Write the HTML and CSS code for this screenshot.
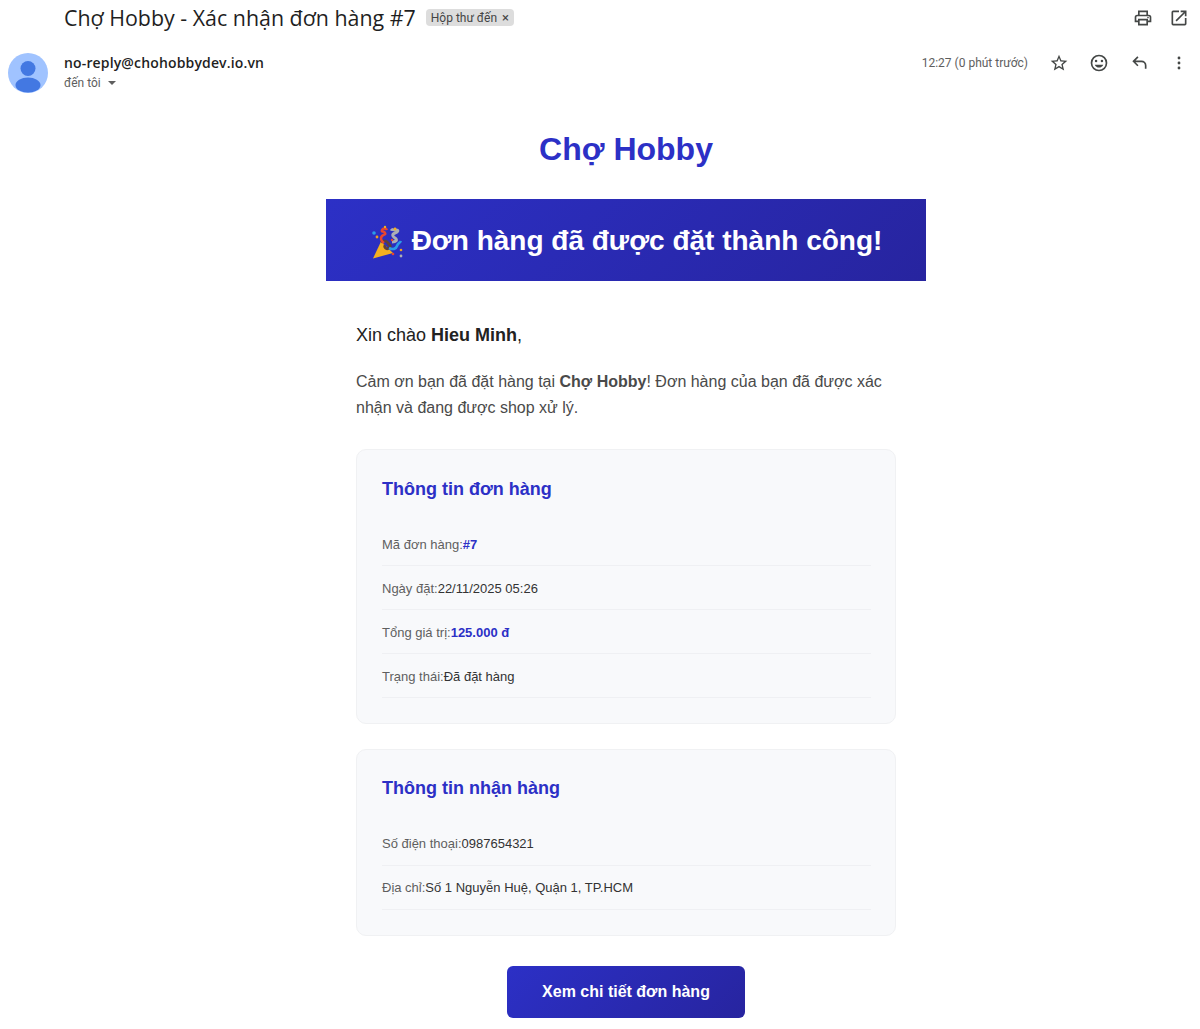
FILE: index.html
```html
<!DOCTYPE html>
<html lang="vi">
<head>
<meta charset="utf-8">
<title>Chợ Hobby - Xác nhận đơn hàng #7</title>
<link rel="stylesheet" href="styles.css">
</head>
<body>
<header class="subject-bar">
  <h1 class="subject">Chợ Hobby - Xác nhận đơn hàng #7</h1>
  <span class="label">Hộp thư đến <span class="label-x">×</span></span>
  <div class="subject-actions">
    <svg class="icon" viewBox="0 0 24 24"><path d="M19 8h-1V3H6v5H5a3 3 0 0 0-3 3v6h4v4h12v-4h4v-6a3 3 0 0 0-3-3zM8 5h8v3H8V5zm8 14H8v-4h8v4zm4-4h-2v-2H6v2H4v-4a1 1 0 0 1 1-1h14a1 1 0 0 1 1 1v4z"/><circle cx="18" cy="11.5" r="1"/></svg>
    <svg class="icon" viewBox="0 0 24 24"><path d="M19 19H5V5h7V3H5a2 2 0 0 0-2 2v14a2 2 0 0 0 2 2h14a2 2 0 0 0 2-2v-7h-2v7zM14 3v2h3.6l-9.8 9.8 1.4 1.4L19 6.4V10h2V3h-7z"/></svg>
  </div>
</header>
<section class="sender-row">
  <svg class="avatar" viewBox="0 0 40 40"><circle cx="20" cy="20" r="20" fill="#a0c3ff"/><circle cx="20" cy="15.5" r="7.5" fill="#4378e2"/><ellipse cx="20" cy="32" rx="12.5" ry="7.5" fill="#4378e2"/></svg>
  <div class="sender-text">
    <div class="sender-mail">no-reply@chohobbydev.io.vn</div>
    <div class="sender-to">đến tôi <span class="caret"></span></div>
  </div>
  <div class="sender-actions">
    <span class="time">12:27 (0 phút trước)</span>
    <svg class="icon" viewBox="0 0 24 24"><path d="M22 9.24l-7.19-.62L12 2 9.19 8.63 2 9.24l5.46 4.73L5.82 21 12 17.27 18.18 21l-1.63-7.03L22 9.24zM12 15.4l-3.76 2.27 1-4.28-3.32-2.88 4.38-.38L12 6.1l1.71 4.04 4.38.38-3.32 2.88 1 4.28L12 15.4z"/></svg>
    <svg class="icon" viewBox="0 0 24 24"><path d="M12 2a10 10 0 1 0 0 20 10 10 0 0 0 0-20zm0 18a8 8 0 1 1 0-16 8 8 0 0 1 0 16z"/><circle cx="15.5" cy="9.5" r="1.5"/><circle cx="8.5" cy="9.5" r="1.5"/><path d="M12 17.5c2.3 0 4.3-1.5 5.1-3.5H6.9c.8 2 2.8 3.5 5.1 3.5z"/></svg>
    <svg class="icon" viewBox="0 0 24 24"><path d="M21 19h-2v-4a4 4 0 0 0-4-4H7.8l3.6 3.6L10 16l-6-6 6-6 1.4 1.4L7.8 9H15a6 6 0 0 1 6 6v4z"/></svg>
    <svg class="icon" viewBox="0 0 24 24"><circle cx="12" cy="6" r="1.7"/><circle cx="12" cy="12" r="1.7"/><circle cx="12" cy="18" r="1.7"/></svg>
  </div>
</section>
<main class="mail">
  <div class="brand">Chợ Hobby</div>
  <div class="banner">
    <svg class="party" viewBox="0 0 36 36">
      <path d="M3 35.500L11 18.500l12 11.500z" fill="#f4b01f"/>
      <path d="M11 19c3-2 6-1 7 1s4 3 1 5-5-1-4-3" fill="none" stroke="#5f4038" stroke-width="2.8"/>
      <path d="M14 20c-3-2-4-5-2-7s4-1 3-3-4-1-3-3 4-2 5 0" fill="none" stroke="#e8452f" stroke-width="2.6"/>
      <path d="M22 19c4 0 6-2 3-4s-3-4 0-5 4-3 1-3-4 0-5-1" fill="none" stroke="#adaeb5" stroke-width="3"/>
      <path d="M19 25c4 2 7 1 8-2s3-3 4-5" fill="none" stroke="#2c9be8" stroke-width="2.6"/>
      <circle cx="4" cy="10" r="1.8" fill="#2c9be8"/><circle cx="7" cy="14" r="1.4" fill="#f0a020"/>
      <circle cx="15" cy="4" r="1.2" fill="#f4b01f"/><circle cx="25" cy="6" r="1.4" fill="#f4b01f"/>
      <circle cx="31" cy="33" r="1.4" fill="#adaeb5"/><circle cx="23" cy="31" r="1.3" fill="#e8452f"/>
      <circle cx="31" cy="27" r="1.3" fill="#f0a020"/><circle cx="22" cy="17" r="1.2" fill="#e8452f"/>
    </svg>
    <h2 class="banner-title">Đơn hàng đã được đặt thành công!</h2>
  </div>
  <div class="content">
    <p class="greeting">Xin chào <strong>Hieu Minh</strong>,</p>
    <p class="intro">Cảm ơn bạn đã đặt hàng tại <strong>Chợ Hobby</strong>! Đơn hàng của bạn đã được xác nhận và đang được shop xử lý.</p>
    <section class="card">
      <h3 class="card-title">Thông tin đơn hàng</h3>
      <div class="row"><span class="key">Mã đơn hàng:</span><strong class="accent">#7</strong></div>
      <div class="row"><span class="key">Ngày đặt:</span><span>22/11/2025 05:26</span></div>
      <div class="row"><span class="key">Tổng giá trị:</span><strong class="accent">125.000 đ</strong></div>
      <div class="row"><span class="key">Trạng thái:</span><span>Đã đặt hàng</span></div>
    </section>
    <section class="card card-shipping">
      <h3 class="card-title">Thông tin nhận hàng</h3>
      <div class="row"><span class="key">Số điện thoại:</span><span>0987654321</span></div>
      <div class="row"><span class="key">Địa chỉ:</span><span>Số 1 Nguyễn Huệ, Quận 1, TP.HCM</span></div>
    </section>
    <div class="cta-wrap"><a class="cta" href="#">Xem chi tiết đơn hàng</a></div>
  </div>
</main>
</body>
</html>
```
FILE: styles.css
```css
* { box-sizing: border-box; }
html, body { margin: 0; padding: 0; }
body {
  background: #fff;
  color: #222;
  font-family: "Liberation Sans", Arial, sans-serif;
  height: 1029px;
  overflow: hidden;
}
.subject-bar {
  display: flex;
  align-items: center;
  height: 35px;
  padding: 0 11px 0 64px;
}
.subject {
  margin: 0;
  font: 400 21.4px/28px "Open Sans", sans-serif;
  color: #1f1f1f;
}
.label {
  margin-left: 10px;
  padding: 0 5px;
  height: 17px;
  border-radius: 4px;
  background: #dddddd;
  color: #444;
  font: 400 12px/17px Roboto, sans-serif;
}
.label-x { font-size: 13px; margin-left: 2px; }
.subject-actions {
  margin-left: auto;
  display: flex;
  gap: 16px;
}
.icon { width: 20px; height: 20px; fill: #444746; display: block; }
.sender-row {
  display: flex;
  align-items: flex-start;
  padding: 18px 11px 0 8px;
  height: 71px;
}
.avatar { width: 40px; height: 40px; flex: none; }
.sender-text { margin-left: 16px; }
.sender-mail {
  font: 600 14px/20px "Open Sans", sans-serif;
  letter-spacing: .15px;
  color: #1f1f1f;
}
.sender-to {
  font: 400 12px/20px Roboto, sans-serif;
  color: #5e5e5e;
  display: flex;
  align-items: center;
}
.caret {
  margin-left: 7px;
  width: 0; height: 0;
  border: 4px solid transparent;
  border-top-color: #5e5e5e;
  border-bottom-width: 0;
}
.sender-actions {
  margin-left: auto;
  display: flex;
  align-items: center;
  gap: 20px;
}
.time { font: 400 12px/20px Roboto, sans-serif; color: #5e5e5e; margin-right: 1px; }
.mail { width: 600px; margin-left: 326px; }
.brand {
  text-align: center;
  font-size: 32px;
  font-weight: 700;
  line-height: 37px;
  color: #2c30c6;
  padding-top: 25px;
}
.banner {
  margin-top: 31px;
  height: 82px;
  padding-top: 2px;
  background: linear-gradient(135deg, #2c30c6 0%, #27249f 100%);
  display: flex;
  align-items: center;
  justify-content: center;
  gap: 6px;
  color: #fff;
}
.party { width: 36px; height: 36px; flex: none; }
.banner-title { margin: 0; font-size: 28px; font-weight: 700; line-height: 34px; }
.content { padding: 41px 30px 0; }
.greeting { margin: 0; font-size: 18px; line-height: 27px; color: #222; }
.intro { margin: 20px 0 0; font-size: 16px; line-height: 26px; color: #4a4a4a; }
.card {
  margin-top: 25px;
  padding: 26px 24px 25px 25px;
  background: #f8f9fb;
  border: 1px solid #f0f1f3;
  border-radius: 10px;
}
.intro + .card { margin-top: 28px; }
.card-title {
  margin: 0 0 20px;
  font-size: 18px;
  line-height: 26px;
  font-weight: 700;
  color: #2c30c6;
}
.row {
  padding: 13px 0 11px;
  height: 44px;
  font-size: 13px;
  line-height: 20px;
  color: #333;
  border-bottom: 1px solid #eff0f3;
}
.card-shipping { padding-top: 25px; }
.card-shipping .card-title { margin-bottom: 21px; }
.card-shipping .row { padding: 12px 0; }
.key { color: #5f5f5f; }
.accent { color: #2c30c6; }
.cta-wrap { margin-top: 30px; text-align: center; }
.cta {
  display: inline-block;
  padding: 16px 35.5px;
  height: 52px;
  border-radius: 6px;
  background: linear-gradient(135deg, #2c30c6 0%, #27249f 100%);
  color: #fff;
  font-size: 16px;
  line-height: 20px;
  font-weight: 700;
  text-decoration: none;
}
```
